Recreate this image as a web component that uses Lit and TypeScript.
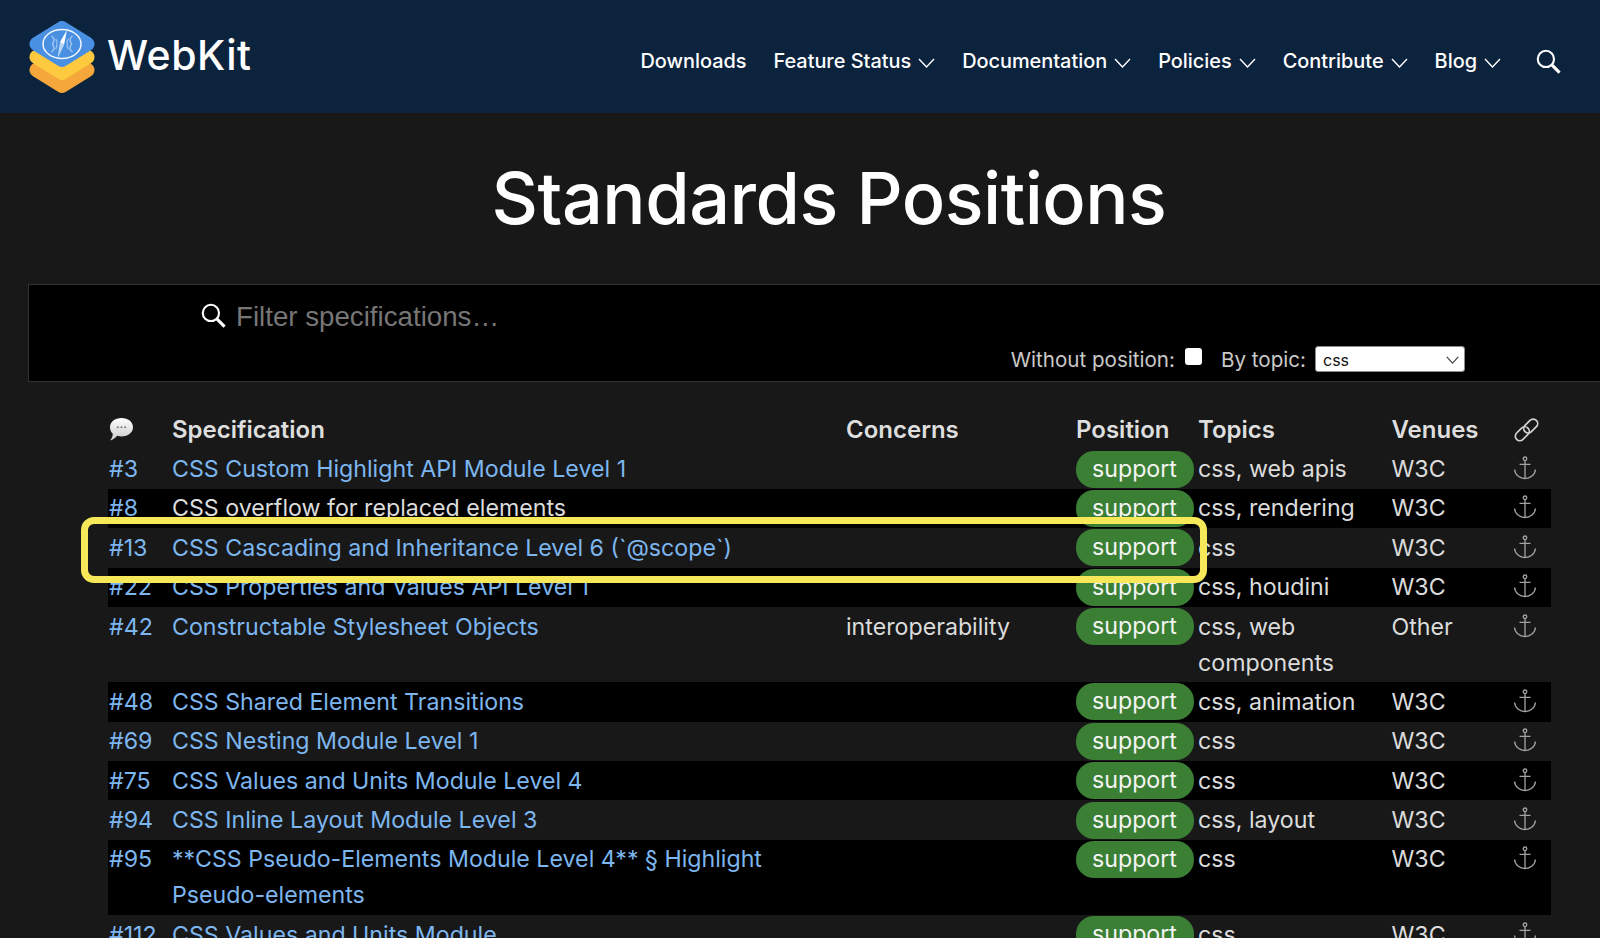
import { LitElement, html, css, svg } from "lit"
import { customElement } from "lit/decorators.js"

type Row = { id: string; spec: string; link?: boolean; concerns?: string; topics: string; venue: string }

const rows: Row[] = [
    { id: "#3", spec: "CSS Custom Highlight API Module Level 1", topics: "css, web apis", venue: "W3C" },
    { id: "#8", spec: "CSS overflow for replaced elements", link: false, topics: "css, rendering", venue: "W3C" },
    { id: "#13", spec: "CSS Cascading and Inheritance Level 6 (`@scope`)", topics: "css", venue: "W3C" },
    { id: "#22", spec: "CSS Properties and Values API Level 1", topics: "css, houdini", venue: "W3C" },
    { id: "#42", spec: "Constructable Stylesheet Objects", concerns: "interoperability", topics: "css, web components", venue: "Other" },
    { id: "#48", spec: "CSS Shared Element Transitions", topics: "css, animation", venue: "W3C" },
    { id: "#69", spec: "CSS Nesting Module Level 1", topics: "css", venue: "W3C" },
    { id: "#75", spec: "CSS Values and Units Module Level 4", topics: "css", venue: "W3C" },
    { id: "#94", spec: "CSS Inline Layout Module Level 3", topics: "css, layout", venue: "W3C" },
    { id: "#95", spec: "**CSS Pseudo-Elements Module Level 4** § Highlight Pseudo-elements", topics: "css", venue: "W3C" },
    { id: "#112", spec: "CSS Values and Units Module", topics: "css", venue: "W3C" },
]

const navItems = [
    { label: "Downloads", menu: false },
    { label: "Feature Status", menu: true },
    { label: "Documentation", menu: true },
    { label: "Policies", menu: true },
    { label: "Contribute", menu: true },
    { label: "Blog", menu: true },
]

const searchIcon = (size: number) => html`<svg width=${size} height=${size} viewBox="0 0 24 24" fill="none" stroke="currentColor">
    <circle cx="9.5" cy="9.5" r="7.8" stroke-width="2"></circle>
    <path d="M15.2 15.2 22.6 22.6" stroke-width="3"></path>
</svg>`

const chevron = html`<svg class="chev" width="17" height="10" viewBox="0 0 17 10" fill="none" stroke="currentColor" stroke-width="1.4">
    <path d="M1 1 8.5 9 16 1"></path>
</svg>`

const anchorIcon = html`<svg width="24" height="24" viewBox="0 0 24 24" fill="none" stroke="#a3a3a3" stroke-width="1.3">
    <circle cx="12" cy="2.8" r="1.8"></circle>
    <path d="M12 4.6V22.4M6.5 8.4H17.5M1.6 13.5C1.8 18.8 7 22.2 12 22.6 17 22.2 22.2 18.8 22.4 13.5"></path>
</svg>`

const linkIcon = html`<svg width="25" height="25" viewBox="0 0 25 25" fill="none" stroke="#d4d4d4" stroke-width="1.7">
    <rect x="12.2" y="1" width="9" height="16" rx="4.5" transform="rotate(45 16.7 9)"></rect>
    <rect x="3.8" y="8.7" width="9" height="16" rx="4.5" transform="rotate(45 8.3 16.7)"></rect>
</svg>`

const bubbleIcon = html`<svg width="25" height="25" viewBox="0 0 25 25">
    <defs>
        <linearGradient id="bubble" x1="0" y1="0" x2="0" y2="1">
            <stop offset="0" stop-color="#ffffff"></stop>
            <stop offset="1" stop-color="#c9c9c9"></stop>
        </linearGradient>
    </defs>
    <path fill="url(#bubble)" d="M12.5 1C19 1 24 4.9 24 10.2 24 15.5 19 19.4 12.5 19.4 11 19.4 9.5 19.2 8.2 18.8 6.6 20.6 4.2 23 1 23.6 2.6 21.8 3.6 19.6 3.8 16.8 2 15.2 1 12.9 1 10.2 1 4.9 6 1 12.5 1Z"></path>
    <circle cx="8.8" cy="10.2" r="1" fill="#777"></circle>
    <circle cx="12.5" cy="10.2" r="1" fill="#777"></circle>
    <circle cx="16.2" cy="10.2" r="1" fill="#777"></circle>
</svg>`

// rounded diamond: the thick round-joined stroke makes the corners
const layer = (cy: number, fill: string) =>
    svg`<polygon points="33,${cy - 15.5} 58,${cy} 33,${cy + 15.5} 8,${cy}" fill=${fill} stroke=${fill} stroke-width="15" stroke-linejoin="round"></polygon>`

const logo = html`<svg class="logo" width="66" height="73" viewBox="0 0 66 73">
    ${layer(49, "#f5a73b")}
    ${layer(36, "#fdc93f")}
    ${layer(23, "#4a90e2")}
    <ellipse cx="33" cy="23" rx="19" ry="14.5" fill="none" stroke="#f2f7fd" stroke-width="1.5"></ellipse>
    <path d="M22.5 15C25.5 17 25.5 20 23.5 23 25.5 26 25.5 29 22.5 31M43.5 15C40.5 17 40.5 20 42.5 23 40.5 26 40.5 29 43.5 31" fill="none" stroke="#9cc5f0" stroke-width="1.5"></path>
    <path d="M26.5 18C28.5 20 28.5 21 27.5 23 28.5 25 28.5 26 26.5 28M39.5 18C37.5 20 37.5 21 38.5 23 37.5 25 37.5 26 39.5 28" fill="none" stroke="#9cc5f0" stroke-width="1.1"></path>
    <path d="M38 9 35 24 31 21Z" fill="#ffffff"></path>
    <path d="M35 24 28.5 37.5 31 21Z" fill="#b9d8f7"></path>
</svg>`

@customElement("app-root")
export class AppRoot extends LitElement {
    static styles = css`
        :host {
            display: block;
            width: 1600px;
            height: 938px;
            overflow: hidden;
            background: #181818;
            color: #dcdcdc;
            font-family: Inter, "Liberation Sans", sans-serif;
        }

        /* Header */
        .top {
            height: 113px;
            box-sizing: border-box;
            background: #0c233e;
            color: #fff;
            display: flex;
            align-items: flex-start;
            padding: 21px 39px 0 29px;
        }
        .brand {
            display: flex;
            align-items: center;
            gap: 12px;
            height: 72px;
            margin-right: auto;
        }
        .brand span {
            font-size: 41px;
            font-weight: 500;
            letter-spacing: 0.5px;
            position: relative;
            top: -2px;
        }
        nav {
            display: flex;
            align-items: center;
            height: 40px;
            margin-top: 20px;
            gap: 27px;
            font-size: 19.9px;
            font-weight: 500;
        }
        nav a {
            display: flex;
            align-items: center;
            gap: 7px;
        }
        .chev {
            margin-top: 3px;
        }
        .nav-search {
            display: flex;
            margin-left: 8px;
        }

        h1 {
            margin: 0;
            padding-top: 41px;
            height: 171px;
            box-sizing: border-box;
            text-align: center;
            font-size: 72px;
            line-height: 88px;
            font-weight: 500;
            color: #fff;
            padding-left: 58px;
            letter-spacing: -0.5px;
        }

        /* Filter panel */
        .filters {
            margin-left: 28px;
            width: 1640px;
            height: 98px;
            box-sizing: border-box;
            background: #000;
            border: 1px solid #333;
            padding: 0 202px 0 172px;
        }
        .search {
            display: flex;
            align-items: center;
            gap: 10px;
            height: 61px;
            color: #fff;
        }
        .search input {
            flex: 1;
            background: none;
            border: none;
            outline: none;
            padding: 2px 0 0;
            font: 27.7px "Liberation Sans", sans-serif;
            color: #eee;
        }
        .search input::placeholder {
            color: #767676;
        }
        .options {
            display: flex;
            justify-content: flex-end;
            align-items: center;
            height: 26px;
            font-size: 20.6px;
            color: #c9c9c9;
        }
        .options input {
            appearance: none;
            width: 17px;
            height: 17px;
            margin: -6px 0 0 10px;
            background: #fff;
            border-radius: 3px;
        }
        .options .topic {
            margin: 0 9px 0 19px;
        }
        .select {
            position: relative;
            display: flex;
        }
        .select select {
            appearance: none;
            width: 150px;
            height: 26px;
            box-sizing: border-box;
            padding: 1px 0 0 7px;
            background: #fff;
            border: 1px solid #8c8c8c;
            border-radius: 3px;
            color: #111;
            font: 16px Inter, sans-serif;
        }
        .select svg {
            position: absolute;
            right: 6px;
            top: 10px;
            color: #444;
        }

        /* Table */
        .table-wrap {
            position: relative;
            margin: 28px 0 0 108px;
            width: 1443px;
        }
        table {
            width: 1443px;
            table-layout: fixed;
            border-collapse: separate;
            border-spacing: 0;
            font-size: 23.2px;
            line-height: 36px;
        }
        th, td {
            padding: 1.7px 0;
            vertical-align: top;
            text-align: left;
        }
        th {
            font-size: 24px;
            font-weight: 600;
            color: #dedede;
        }
        th svg, td svg {
            display: block;
        }
        tbody tr:nth-child(even) {
            background: #000;
        }
        th.icon-col svg {
            margin-top: 5px;
        }
        td.anchor svg {
            margin: 5px 0 0 -1px;
        }
        th:first-child, td:first-child {
            padding-left: 1px;
        }
        .c-id { width: 64px; }
        .c-spec { width: 674px; }
        .c-concerns { width: 230px; }
        .c-position { width: 122px; }
        .c-topics { width: 193.5px; }
        .c-venue { width: 122.5px; }
        .c-anchor { width: 37px; }

        a.spec-link, .num {
            color: #7db6ef;
        }
        .pill {
            display: block;
            width: 118px;
            box-sizing: border-box;
            padding-left: 16px;
            background: #3a7f33;
            color: #f4f4f4;
            border-radius: 18px;
            height: 37px;
            margin: -0.5px 0 -0.5px;
        }
        .highlight {
            position: absolute;
            left: -27px;
            top: 106.5px;
            width: 1126px;
            height: 66px;
            box-sizing: border-box;
            border: 7px solid #f6e858;
            border-radius: 13px;
            pointer-events: none;
        }
    `

    render() {
        return html`
            <header class="top">
                <div class="brand">${logo}<span>WebKit</span></div>
                <nav>
                    ${navItems.map((n) => html`<a>${n.label}${n.menu ? chevron : ""}</a>`)}
                    <span class="nav-search">${searchIcon(25)}</span>
                </nav>
            </header>
            <h1>Standards Positions</h1>
            <section class="filters">
                <div class="search">
                    ${searchIcon(25)}
                    <input type="text" placeholder="Filter specifications…" />
                </div>
                <div class="options">
                    <label>Without position:</label>
                    <input type="checkbox" />
                    <label class="topic">By topic:</label>
                    <div class="select">
                        <select><option>css</option></select>
                        <svg width="13" height="8" viewBox="0 0 17 10" fill="none" stroke="currentColor" stroke-width="1.6"><path d="M1 1 8.5 9 16 1"></path></svg>
                    </div>
                </div>
            </section>
            <div class="table-wrap">
                <table>
                    <colgroup>
                        <col class="c-id" /><col class="c-spec" /><col class="c-concerns" /><col class="c-position" />
                        <col class="c-topics" /><col class="c-venue" /><col class="c-anchor" />
                    </colgroup>
                    <thead>
                        <tr>
                            <th class="icon-col">${bubbleIcon}</th>
                            <th>Specification</th>
                            <th>Concerns</th>
                            <th>Position</th>
                            <th>Topics</th>
                            <th>Venues</th>
                            <th class="icon-col">${linkIcon}</th>
                        </tr>
                    </thead>
                    <tbody>
                        ${rows.map(
                            (r) => html`<tr>
                                <td class="num">${r.id}</td>
                                <td>${r.link === false ? r.spec : html`<a class="spec-link">${r.spec}</a>`}</td>
                                <td>${r.concerns ?? ""}</td>
                                <td><span class="pill">support</span></td>
                                <td>${r.topics}</td>
                                <td>${r.venue}</td>
                                <td class="anchor">${anchorIcon}</td>
                            </tr>`
                        )}
                    </tbody>
                </table>
                <div class="highlight"></div>
            </div>
        `
    }
}
